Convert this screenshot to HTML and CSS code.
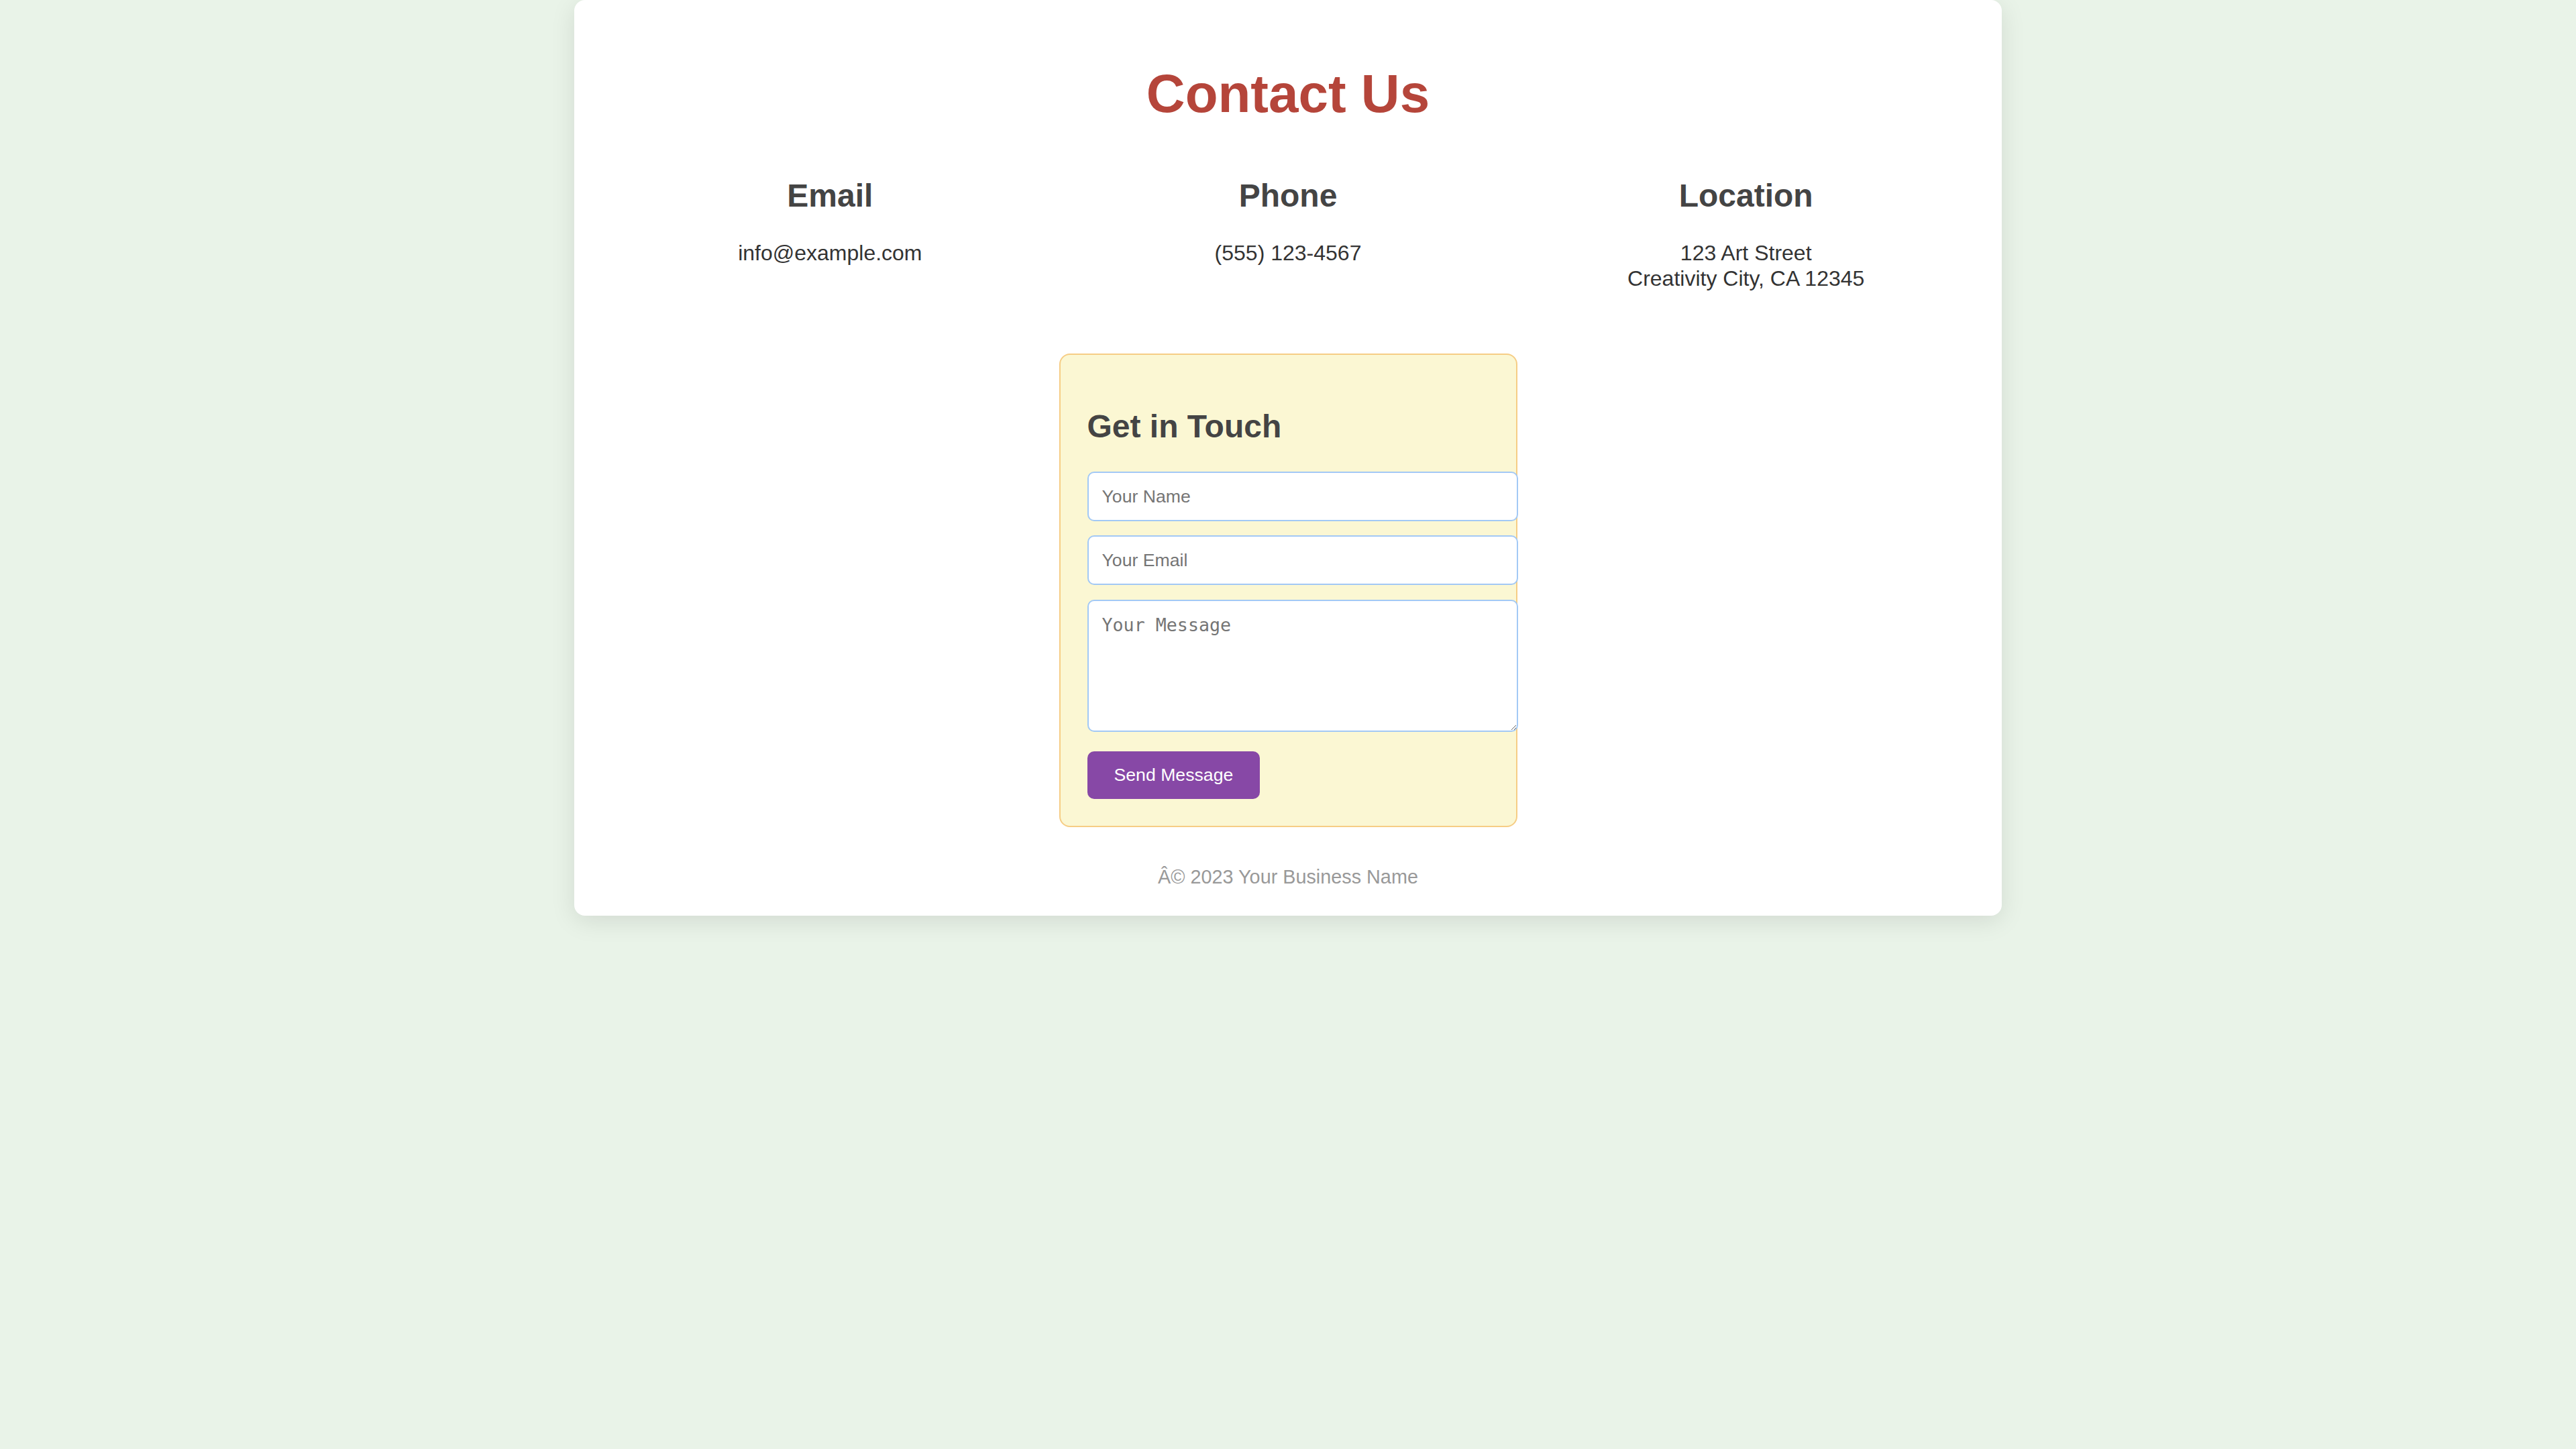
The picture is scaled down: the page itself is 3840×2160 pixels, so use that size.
FILE: index.html
```html
<!DOCTYPE html>
<html lang="en">
<head>
<meta charset="utf-8">
<title>Contact Us</title>
<link rel="stylesheet" href="styles.css">
</head>
<body>
<div class="container">
  <h1 class="title">Contact Us</h1>
  <div class="info-row">
    <div class="info-col">
      <h3 class="info-head">Email</h3>
      <p class="info-text">info@example.com</p>
    </div>
    <div class="info-col">
      <h3 class="info-head">Phone</h3>
      <p class="info-text">(555) 123-4567</p>
    </div>
    <div class="info-col">
      <h3 class="info-head">Location</h3>
      <p class="info-text">123 Art Street<br>Creativity City, CA 12345</p>
    </div>
  </div>
  <div class="form-box">
    <h2 class="form-title">Get in Touch</h2>
    <form class="form">
      <input class="field field-name" type="text" placeholder="Your Name">
      <input class="field field-email" type="email" placeholder="Your Email">
      <textarea class="field-msg" placeholder="Your Message"></textarea>
      <button class="send" type="button">Send Message</button>
    </form>
  </div>
  <p class="footer">Â© 2023 Your Business Name</p>
</div>
</body>
</html>
```
FILE: styles.css
```css
html, body {
  margin: 0;
  padding: 0;
}
body {
  background: #e9f3e8;
  font-family: "Liberation Sans", Arial, sans-serif;
  color: #333;
  min-height: 2160px;
}
.container {
  box-sizing: border-box;
  width: 2128px;
  margin: 0 auto;
  padding: 40px 40px 41px;
  background: #ffffff;
  border-radius: 16px;
  box-shadow: 0 8px 36px rgba(0, 0, 0, 0.1);
}
.title {
  margin: 54px 0 0;
  font-size: 80px;
  line-height: 92px;
  font-weight: 700;
  color: #b5453a;
  text-align: center;
}
.info-row {
  display: flex;
  margin-top: 78px;
}
.info-col {
  flex: 1;
  text-align: center;
}
.info-head {
  margin: 0;
  font-size: 48px;
  line-height: 56px;
  font-weight: 700;
  color: #444;
}
.info-text {
  margin: 38px 0 0;
  font-size: 32px;
  line-height: 38px;
  color: #333;
}
.form-box {
  box-sizing: border-box;
  width: 683px;
  margin: 93px auto 0;
  padding: 40px;
  background: #fbf7d3;
  border: 2px solid #f6cd85;
  border-radius: 16px;
}
.form-title {
  margin: 40px 0 40px;
  font-size: 48px;
  line-height: 54px;
  font-weight: 700;
  color: #444;
}
.form {
  display: flex;
  flex-direction: column;
  align-items: flex-start;
}
.field,
.field-msg {
  box-sizing: border-box;
  display: block;
  width: 642px;
  margin: 0;
  padding: 0 20px;
  background: #fff;
  border: 2px solid #a3c9f5;
  border-radius: 10px;
  color: #333;
  outline: none;
}
.field {
  height: 74px;
  font-family: "Liberation Sans", Arial, sans-serif;
  font-size: 26.67px;
}
.field::placeholder,
.field-msg::placeholder {
  color: #757575;
}
.field-name {
  margin-bottom: 21px;
}
.field-email {
  margin-bottom: 22px;
}
.field-msg {
  height: 197px;
  padding: 20px;
  font-family: "DejaVu Sans Mono", "Liberation Mono", monospace;
  font-size: 26.67px;
  line-height: normal;
  resize: both;
  margin-bottom: 29px;
}
.send {
  height: 71px;
  padding: 0 40px;
  border: none;
  border-radius: 10px;
  background: #8748a6;
  color: #fff;
  font-family: "Liberation Sans", Arial, sans-serif;
  font-size: 26.67px;
  cursor: pointer;
}
.footer {
  margin: 58px 0 0;
  font-size: 28.8px;
  line-height: 33px;
  color: #999;
  text-align: center;
}
```
